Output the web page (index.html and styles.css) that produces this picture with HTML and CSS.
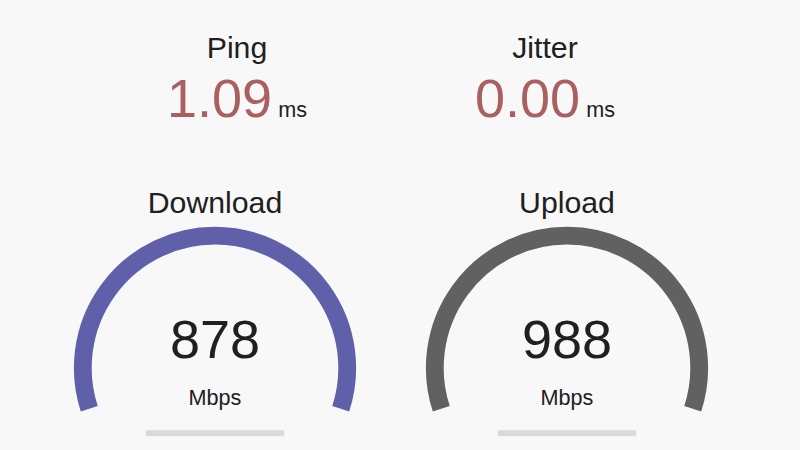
FILE: index.html
```html
<!DOCTYPE html>
<html lang="en">
<head>
<meta charset="utf-8">
<title>Speedtest</title>
<link rel="stylesheet" href="styles.css">
</head>
<body>
<main class="page">
  <section class="group group-latency">
    <div class="stat">
      <div class="stat-name">Ping</div>
      <div class="stat-value">1.09</div>
      <div class="stat-unit">ms</div>
    </div>
    <div class="stat">
      <div class="stat-name">Jitter</div>
      <div class="stat-value">0.00</div>
      <div class="stat-unit">ms</div>
    </div>
  </section>
  <section class="group group-speed">
    <div class="gauge">
      <svg class="gauge-svg" viewBox="0 0 346 270" width="346" height="270" aria-hidden="true">
        <path class="arc arc-download" d="M 47.27 224.75 A 132.2 132.2 0 1 1 298.73 224.75"/>
        <rect class="progress" x="103.8" y="246.24" width="138.4" height="5.94"/>
      </svg>
      <div class="gauge-name">Download</div>
      <div class="gauge-value">878</div>
      <div class="gauge-unit">Mbps</div>
    </div>
    <div class="gauge">
      <svg class="gauge-svg" viewBox="0 0 346 270" width="346" height="270" aria-hidden="true">
        <path class="arc arc-upload" d="M 47.27 224.75 A 132.2 132.2 0 1 1 298.73 224.75"/>
        <rect class="progress" x="103.8" y="246.24" width="138.4" height="5.94"/>
      </svg>
      <div class="gauge-name">Upload</div>
      <div class="gauge-value">988</div>
      <div class="gauge-unit">Mbps</div>
    </div>
  </section>
</main>
</body>
</html>
```

FILE: styles.css
```css
html, body {
  margin: 0;
  padding: 0;
  background: #f8f8f8;
}

body {
  font-family: "Liberation Sans", Arial, Helvetica, sans-serif;
  font-size: 21.6px;
  color: #202020;
  overflow: hidden;
}

.page {
  width: 782px;
  padding-top: 30px;
}

.group {
  display: flex;
  justify-content: center;
  gap: 6px;
}

.group-speed {
  margin-top: 3px;
}

/* Ping / Jitter */
.stat {
  width: 302px;
  height: 151px;
  display: flex;
  flex-wrap: wrap;
  justify-content: center;
  align-items: baseline;
  align-content: flex-start;
  column-gap: 6px;
}

.stat-name {
  width: 100%;
  text-align: center;
  font-size: 30.24px;
  line-height: 36px;
}

.stat-value {
  font-size: 54px;
  line-height: 64px;
  color: #aa6060;
}

.stat-unit {
  font-size: 21.6px;
}

/* Gauges */
.gauge {
  width: 346px;
  height: 270px;
  display: grid;
  text-align: center;
}

.gauge > * {
  grid-area: 1 / 1;
}

.gauge-svg {
  display: block;
}

.arc {
  fill: none;
  stroke-width: 17.82;
  stroke-linecap: butt;
}

.arc-download {
  stroke: #6060aa;
}

.arc-upload {
  stroke: #616161;
}

.progress {
  fill: rgba(128, 128, 128, 0.25);
}

.gauge-name {
  align-self: start;
  padding-top: 2px;
  font-size: 30.24px;
}

.gauge-value {
  align-self: end;
  margin-bottom: 83.7px;
  font-size: 54px;
}

.gauge-unit {
  align-self: end;
  margin-bottom: 43.2px;
  font-size: 21.6px;
}
```
